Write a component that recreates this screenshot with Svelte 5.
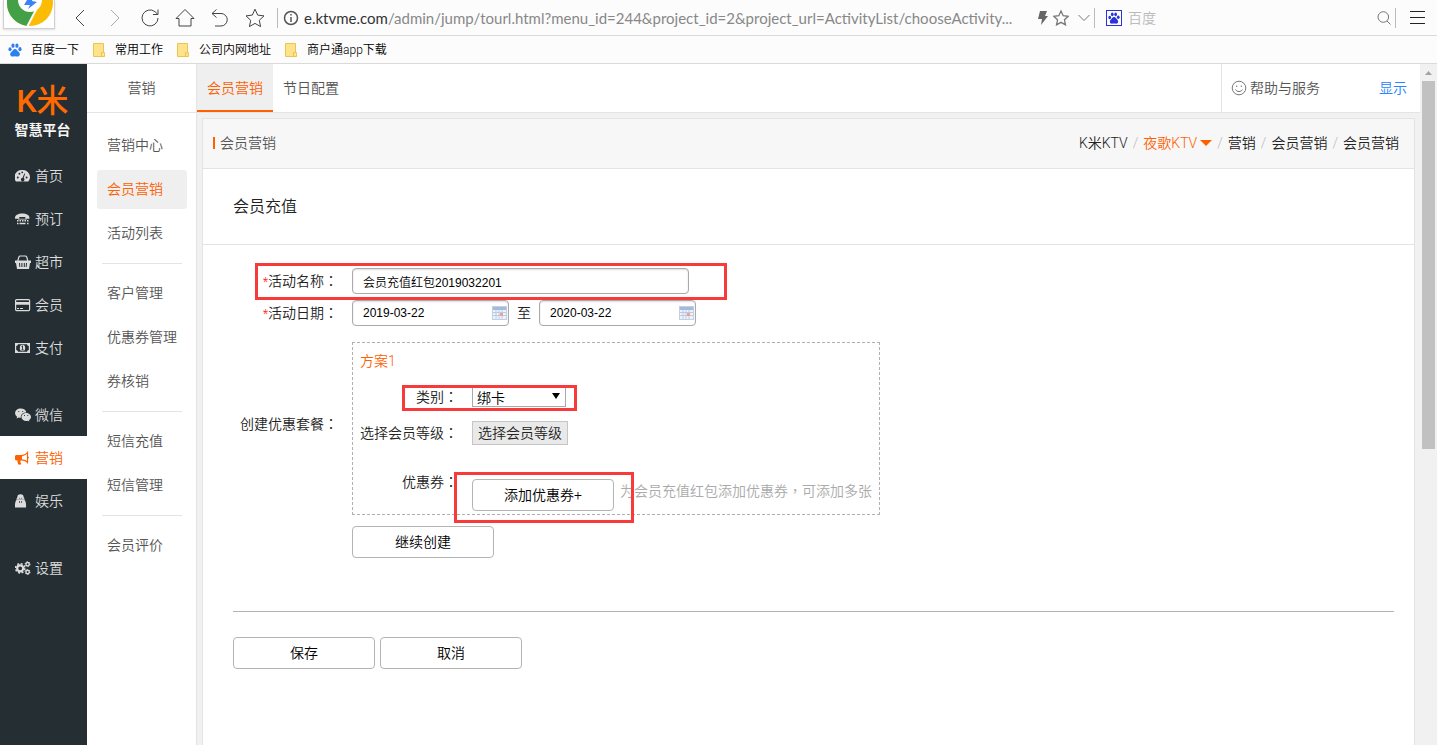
<script lang="ts">
  type NavItem = { label: string; icon: string; gap?: boolean };

  const bookmarks = ['常用工作', '公司内网地址', '商户通app下载'];

  const navItems: NavItem[] = [
    { label: '首页', icon: 'dashboard' },
    { label: '预订', icon: 'phone' },
    { label: '超市', icon: 'basket' },
    { label: '会员', icon: 'card' },
    { label: '支付', icon: 'money' },
    { label: '微信', icon: 'wechat', gap: true },
    { label: '营销', icon: 'horn' },
    { label: '娱乐', icon: 'game' },
    { label: '设置', icon: 'gears', gap: true }
  ];

  const menuGroups = [
    ['营销中心', '会员营销', '活动列表'],
    ['客户管理', '优惠券管理', '券核销'],
    ['短信充值', '短信管理'],
    ['会员评价']
  ];

  let activeNav = $state('营销');
  let activeMenu = $state('会员营销');
  let activeTab = $state('会员营销');

  let name = $state('会员充值红包2019032201');
  let startDate = $state('2019-03-22');
  let endDate = $state('2020-03-22');
  let category = $state('绑卡');
  let keyword = $state('');
</script>

{#snippet navIcon(icon: string)}
  <svg class="nav-icon" width="16" height="14" viewBox="0 0 16 14" fill="currentColor" aria-hidden="true">
    {#if icon === 'dashboard'}
      <path fill-rule="evenodd" d="M7.2 1A7.200 7.200 0 0 0 1 12.600h12.400A7.200 7.200 0 0 0 7.200 1zM1.800 8.500a1 1 0 1 1 2 0 1 1 0 0 1-2 0zM3.400 4.800a1 1 0 1 1 2 0 1 1 0 0 1-2 0zM6.300 3.300a.9.9 0 1 1 1.800 0 .9.9 0 0 1-1.800 0zM10.600 8.500a1 1 0 1 1 2 0 1 1 0 0 1-2 0zM9.300 4.400l.8.4-1.400 4.200a1.800 1.800 0 1 1-1.100-.3z" />
    {:else if icon === 'phone'}
      <path d="M0 6C0 3 3 1.500 7.300 1.500s7.200 1.500 7.200 4.500v.7h-4.200V5h-6v1.700H0z" />
      <path d="M2 8h1.500v1.500H2zM4.500 8H6v1.500H4.500zM7 8h1.500v1.500H7zM9.500 8H11v1.500H9.500zM12 8h1.500v1.500H12zM2 10.800h1.500v1.500H2zM4.500 10.800h6v1.500h-6zM12 10.800h1.500v1.500H12z" />
      <path d="M3 6.500h9V8H3z" opacity="0.5" />
    {:else if icon === 'basket'}
      <path d="M2.800 6l1-4 1-1h6l1 1 1 4" fill="none" stroke="currentColor" stroke-width="1.200" />
      <path fill-rule="evenodd" d="M0 5.500h16V8h-1l-1 6H2L1 8H0zM4 8l.4 4h.9L5 8zm2.400 0v4h1V8zm2.400 0v4h1V8zM11 8l-.3 4h.9L12 8z" />
    {:else if icon === 'card'}
      <rect x="0.600" y="1.600" width="14" height="11" rx="1" fill="none" stroke="currentColor" stroke-width="1.200" />
      <path d="M1 4h13v2.800H1zM2 10h2v1H2zM5 10h3v1H5z" />
    {:else if icon === 'money'}
      <path fill-rule="evenodd" d="M0 2h15v10H0zM3 3.200A2 2 0 0 1 1.200 5v4A2 2 0 0 1 3 10.800h9A2 2 0 0 1 13.800 9V5A2 2 0 0 1 12 3.200z" />
      <ellipse cx="7.500" cy="7" rx="2.700" ry="3.300" />
      <path d="M6.500 5.500l1-.7v4M6.300 9h2.600" fill="none" stroke="#242e33" stroke-width="0.900" />
    {:else if icon === 'wechat'}
      <path d="M5.800.5C2.600.5.1 2.500.1 5.200c0 1.500.8 2.700 2 3.600L1.600 10.500l2-1c.8.2 1.500.3 2.300.3-.8-3 2-5.500 5.500-5.400C10.900 2.100 8.600.5 5.800.5z" />
      <path d="M16 9c0-2.300-2.300-4-4.800-4S6.400 6.700 6.400 9s2.200 4 4.800 4c.6 0 1.100-.1 1.700-.3l1.500.9-.4-1.500C15.200 11.400 16 10.300 16 9z" />
      <path d="M3.300 3.500h1M7.200 3.500h1M9 7.500h1M12.300 7.500h1" stroke="#242e33" stroke-width="0.900" />
    {:else if icon === 'horn'}
      <path d="M1 4h6v5.500H5.500c-.3 1.500.2 2.500.9 3.500-1 1-2.800.8-3.200.2-.5-1.400-1-2.400-.5-3.700H1L0 8.500V5z" />
      <path d="M7 4.600C9 4.500 11 3.500 12.500 1.500v10C11 9.500 9 9 7 8.900" fill="none" stroke="currentColor" stroke-width="1.200" />
      <path d="M12.800 5.300c1.400.3 1.400 2.200 0 2.600z" />
    {:else if icon === 'game'}
      <path d="M5.500.3C3.300.3 2.200 1.600 2.400 3.300L1.600 4.500v1h7.800v-1L8.600 3.300C8.800 1.600 7.700.3 5.500.3z" />
      <path d="M1.600 5.500h7.800c1.400 2 1.900 4.500 1.600 8H0c-.3-3.500.2-6 1.600-8z" />
      <path d="M4.200 4.300h1M6.200 4.300h1M4.500 7v2M6.600 7v2" stroke="#242e33" stroke-width="0.700" />
    {:else if icon === 'gears'}
      <circle cx="5.200" cy="7.300" r="3" fill="none" stroke="currentColor" stroke-width="2.200" />
      <circle cx="5.200" cy="7.300" r="4.600" fill="none" stroke="currentColor" stroke-width="1.600" stroke-dasharray="2 1.610" />
      <circle cx="12.600" cy="3.200" r="1.700" fill="none" stroke="currentColor" stroke-width="1.400" />
      <circle cx="12.600" cy="3.200" r="2.500" fill="none" stroke="currentColor" stroke-dasharray="1.200 1.420" />
      <circle cx="12.600" cy="11" r="1.700" fill="none" stroke="currentColor" stroke-width="1.400" />
      <circle cx="12.600" cy="11" r="2.500" fill="none" stroke="currentColor" stroke-dasharray="1.200 1.420" />
    {/if}
  </svg>
{/snippet}

{#snippet paw(size: number)}
  <svg width={size} height={size} viewBox="0 0 16 16" fill="currentColor" aria-hidden="true">
    <ellipse cx="2.300" cy="7.200" rx="1.800" ry="2.300" />
    <ellipse cx="5.700" cy="3" rx="1.800" ry="2.500" />
    <ellipse cx="10.200" cy="3" rx="1.800" ry="2.500" />
    <ellipse cx="13.700" cy="7" rx="1.800" ry="2.300" />
    <path d="M8 6.800c-2 0-2.500 1.900-4 3.200C1.500 12 2.300 15.500 5.200 15.500c1 0 1.800-.3 2.800-.3s1.800.3 2.800.3c3 0 3.700-3.500 1.300-5.500C10.500 8.700 10 6.800 8 6.800z" />
  </svg>
{/snippet}

{#snippet calendar()}
  <svg class="calendar" width="15" height="14" viewBox="0 0 15 14" aria-hidden="true">
    <rect x="0.500" y="0.500" width="14" height="13" fill="#eef3fb" stroke="#c3cfe2" />
    <path d="M1 1h13v3H1z" fill="#a3b9de" />
    <path d="M1 6.500h13M1 9.500h13M4 4v9M7 4v9M10 4v9" stroke="#bccbe4" />
    <rect x="8" y="7" width="3" height="3" fill="#f0a08c" />
  </svg>
{/snippet}

{#snippet colon()}<span class="colon">：</span>{/snippet}

<div class="window">
  <header class="browser">
    <div class="toolbar">
      <div class="browser-logo">
        <svg width="46" height="27" viewBox="0 0 46 27" aria-hidden="true">
          <circle cx="23" cy="3" r="23" fill="#fbbc05" />
          <path d="M0 0v3a23 23 0 0 0 20 23L31 6 12 0z" fill="#43a047" />
          <path d="M20 27L32 4" stroke="#fff" stroke-width="2" />
          <circle cx="23" cy="0" r="12" fill="#fff" />
          <path d="M20 0l-3 5 6 0-2 4 9-7-5-1 1-3z" fill="#3b82f6" />
        </svg>
      </div>
      <div class="tools">
        <button aria-label="后退">
          <svg width="20" height="20" viewBox="0 0 20 20"><path d="M14 2L6 10l8 8" /></svg>
        </button>
        <button class="disabled" aria-label="前进">
          <svg width="20" height="20" viewBox="0 0 20 20"><path d="M6 2l8 8-8 8" /></svg>
        </button>
        <button aria-label="刷新">
          <svg width="20" height="20" viewBox="0 0 20 20"><path d="M18 10a8 8 0 1 1-3-6.300L17.500 6M18 1.500V6.500H13" /></svg>
        </button>
        <button aria-label="主页">
          <svg width="20" height="20" viewBox="0 0 20 20"><path d="M1 10.500L10 1.500l9 9h-3v7.500H4v-7.500z" /></svg>
        </button>
        <button aria-label="恢复">
          <svg width="20" height="20" viewBox="0 0 20 20"><path d="M6.500 1.500L2 5.500l4.500 4M2 5.500h9a6 6 0 0 1 0 12.500H5" /></svg>
        </button>
        <button aria-label="收藏">
          <svg width="20" height="20" viewBox="0 0 20 20"><path d="M10 1.200l2.700 5.900 6.300.8-4.700 4.400 1.300 6.300L10 15.400l-5.600 3.200 1.300-6.300L1 7.900l6.300-.8z" /></svg>
        </button>
      </div>
      <div class="address">
        <svg width="16" height="16" viewBox="0 0 16 16" fill="none" stroke="#555" stroke-width="1.500" aria-hidden="true">
          <circle cx="8" cy="8" r="6.500" />
          <path d="M8 7v5M8 4v1.600" />
        </svg>
        <div class="url"><b>e.ktvme.com</b>/admin/jump/tourl.html?menu_id=244&amp;project_id=2&amp;project_url=ActivityList/chooseActivity...</div>
        <svg width="10" height="14" viewBox="0 0 10 14" fill="#666" aria-hidden="true"><path d="M2 0h7L7 5h3L3 14l1-6H0z" /></svg>
        <svg width="16" height="16" viewBox="0 0 20 20" fill="none" stroke="#777" stroke-width="1.600" aria-hidden="true"><path d="M10 1.200l2.700 5.900 6.300.8-4.700 4.400 1.300 6.300L10 15.400l-5.600 3.200 1.300-6.300L1 7.900l6.300-.8z" /></svg>
        <svg class="expand" width="12" height="8" viewBox="0 0 12 8" fill="none" stroke="#777" aria-hidden="true"><path d="M.5 1L6 6.500 11.500 1" /></svg>
      </div>
      <div class="search">
        <span class="engine">{@render paw(12)}</span>
        <input type="text" placeholder="百度" aria-label="搜索" bind:value={keyword} />
        <svg width="14" height="14" viewBox="0 0 14 14" fill="none" stroke="#777" aria-hidden="true">
          <circle cx="6.300" cy="6" r="5.300" />
          <path d="M10 10l3.500 3.500" />
        </svg>
      </div>
      <button class="menu" aria-label="菜单">
        <svg width="15" height="15" viewBox="0 0 15 15"><path d="M0 1.500h15M0 7.500h15M0 13.500h15" /></svg>
      </button>
    </div>
    <nav class="bookmarks">
      <a href="#baidu"><span class="baidu">{@render paw(14)}</span>百度一下</a>
      {#each bookmarks as bookmark}
        <a href="#bookmark">
          <svg width="14" height="14" viewBox="0 0 14 14" aria-hidden="true">
            <path d="M1.500.5h10v9h1v4h-11z" fill="#ffe38c" stroke="#e8c64e" />
            <path d="M9.500 13V9.500h2" fill="none" stroke="#e8c64e" />
          </svg>
          {bookmark}
        </a>
      {/each}
    </nav>
  </header>

  <div class="app">
    <nav class="sidebar">
      <div class="brand">
        <span class="brand-name">K米</span>
        <span class="brand-sub">智慧平台</span>
      </div>
      {#each navItems as item}
        <button
          class="nav-item"
          class:gap={item.gap}
          class:active={activeNav === item.label}
          onclick={() => (activeNav = item.label)}
        >
          {@render navIcon(item.icon)}
          {item.label}
        </button>
      {/each}
    </nav>

    <aside class="submenu">
      <h2>营销</h2>
      {#each menuGroups as group}
        <div class="group">
          {#each group as entry}
            <button class:active={activeMenu === entry} onclick={() => (activeMenu = entry)}>{entry}</button>
          {/each}
        </div>
      {/each}
    </aside>

    <main>
      <div class="tabs">
        {#each ['会员营销', '节日配置'] as tab}
          <button class="tab" class:active={activeTab === tab} onclick={() => (activeTab = tab)}>{tab}</button>
        {/each}
        <div class="help">
          <svg width="16" height="16" viewBox="0 0 16 16" fill="none" stroke="#777" aria-hidden="true">
            <circle cx="8" cy="8" r="6.800" />
            <path d="M4.500 9.500c1.500 2.700 5.500 2.700 7 0M5.700 5.500v1.500M10.300 5.500v1.500" />
          </svg>
          <a href="#help">帮助与服务</a>
          <a class="show" href="#show">显示</a>
        </div>
      </div>

      <section class="panel">
        <div class="panel-head">
          <h1>会员营销</h1>
          <div class="crumbs">
            <a href="#ktv">K米KTV</a><i>/</i><a class="shop" href="#shop">夜歌KTV</a><i>/</i><a href="#marketing">营销</a><i>/</i><a href="#member">会员营销</a><i>/</i><a href="#member">会员营销</a>
          </div>
        </div>
        <h2 class="title">会员充值</h2>

        <form onsubmit={(e) => e.preventDefault()}>
          <div class="row marked">
            <label for="name"><em>*</em>活动名称{@render colon()}</label>
            <input id="name" class="text name" type="text" bind:value={name} />
            <span class="mark mark-name"></span>
          </div>
          <div class="row">
            <label for="start"><em>*</em>活动日期{@render colon()}</label>
            <span class="date">
              <input id="start" class="text" type="text" bind:value={startDate} />
              {@render calendar()}
            </span>
            <label class="to" for="end">至</label>
            <span class="date">
              <input id="end" class="text" type="text" bind:value={endDate} />
              {@render calendar()}
            </span>
          </div>

          <div class="row plans">
            <span class="label">创建优惠套餐{@render colon()}</span>
            <div class="plan">
              <h3>方案1</h3>
              <div class="plan-row marked">
                <label for="category">类别{@render colon()}</label>
                <span class="select">
                  <select id="category" bind:value={category}>
                    <option>绑卡</option>
                    <option>充值</option>
                  </select>
                </span>
                <span class="mark mark-category"></span>
              </div>
              <div class="plan-row">
                <label for="level">选择会员等级{@render colon()}</label>
                <button id="level" class="level" type="button">选择会员等级</button>
              </div>
              <div class="plan-row coupon marked">
                <label for="coupon">优惠券{@render colon()}</label>
                <button id="coupon" class="btn" type="button">添加优惠券+</button>
                <span class="hint">为会员充值红包添加优惠券，可添加多张</span>
                <span class="mark mark-coupon"></span>
              </div>
            </div>
          </div>
          <button class="btn more" type="button">继续创建</button>

          <div class="actions">
            <button class="btn" type="submit">保存</button>
            <button class="btn" type="button">取消</button>
          </div>
        </form>
      </section>
    </main>

    <div class="scrollbar">
      <svg width="7" height="4" viewBox="0 0 7 4" aria-hidden="true"><path d="M0 4l3.500-4L7 4z" fill="#a3a3a3" /></svg>
      <div class="thumb"></div>
    </div>
  </div>
</div>

<style>
  :global(body) {
    margin: 0;
  }

  .window {
    display: flex;
    flex-direction: column;
    height: 100vh;
    overflow: hidden;
    font: 14px/20px Roboto, 'Noto Sans CJK SC', sans-serif;
    font-weight: 350;
    color: #222;
  }

  .window :global(*) {
    box-sizing: border-box;
  }

  button,
  input,
  select {
    font: inherit;
    color: inherit;
    margin: 0;
    padding: 0;
    border: none;
    background: none;
  }

  button {
    cursor: pointer;
  }

  a {
    color: inherit;
    text-decoration: none;
  }

  h1,
  h2,
  h3 {
    margin: 0;
    font: inherit;
  }

  svg {
    display: block;
    flex: none;
  }

  /* browser bars */
  .browser {
    flex: none;
    background: #fcfcfc;
  }

  .toolbar {
    display: flex;
    align-items: center;
    height: 36px;
    border-bottom: 1px solid #dadada;
  }

  .browser-logo {
    align-self: flex-start;
    width: 52px;
    height: 29px;
    margin-left: 3px;
    padding-left: 3px;
    background: #fff;
    border: 1px solid #d0d0d0;
    border-top: none;
    box-shadow: 0 1px 2px #ddd;
    overflow: hidden;
  }

  .tools {
    display: flex;
    gap: 15px;
    padding: 0 12px 0 15px;
  }

  .tools svg,
  .menu svg {
    fill: none;
    stroke: #444;
  }

  .tools .disabled svg {
    stroke: #aaa;
  }

  .address {
    display: flex;
    align-items: center;
    gap: 5px;
    flex: 1;
    min-width: 0;
    height: 20px;
    padding: 0 4px 0 5px;
    border: solid #bbb;
    border-width: 0 1px;
  }

  .expand {
    margin-left: 4px;
  }

  .url {
    flex: 1;
    overflow: hidden;
    white-space: nowrap;
    font: 15px/20px Lato, 'Noto Sans', sans-serif;
    color: #888;
  }

  .url b {
    font-weight: 400;
    color: #333;
  }

  .search {
    display: flex;
    align-items: center;
    width: 301px;
    height: 20px;
    padding: 0 4px 0 11px;
    border-right: 1px solid #bbb;
  }

  .engine {
    display: flex;
    align-items: center;
    justify-content: center;
    width: 16px;
    height: 16px;
    border: 1px solid #2a33d8;
    color: #2a33d8;
  }

  .search input {
    flex: 1;
    min-width: 0;
    padding-left: 6px;
    outline: none;
  }

  .search input::placeholder {
    color: #bbb;
  }

  .menu {
    padding: 0 12px 0 14px;
  }

  .menu svg {
    stroke: #222;
  }

  .bookmarks {
    display: flex;
    align-items: center;
    gap: 13px;
    height: 28px;
    padding-left: 8px;
    border-bottom: 1px solid #dadada;
    font-size: 12px;
    color: #000;
  }

  .bookmarks a {
    display: flex;
    align-items: center;
    gap: 9px;
  }

  .baidu {
    color: #2d7ff0;
  }

  /* app */
  .app {
    display: flex;
    flex: 1;
    min-height: 0;
  }

  .sidebar {
    flex: none;
    width: 87px;
    background: #242e33;
    color: #dcdcdc;
  }

  .brand {
    display: flex;
    flex-direction: column;
    align-items: center;
    height: 90px;
    padding: 18px 2px 0 0;
  }

  .brand-name {
    font-size: 32px;
    line-height: 38px;
    font-weight: 500;
    color: #ff6a00;
  }

  .brand-sub {
    font-size: 14px;
    line-height: 20px;
    font-weight: 700;
    color: #f4f4f4;
  }

  .nav-item {
    display: flex;
    align-items: center;
    gap: 4px;
    width: 100%;
    height: 43px;
    padding-left: 15px;
  }

  .nav-item.gap {
    margin-top: 24px;
  }

  .nav-item.active {
    background: #fff;
    color: #ff6000;
  }

  .submenu {
    flex: none;
    width: 110px;
    border-right: 1px solid #e4e4e4;
    background: #fff;
    color: #555;
  }

  .submenu h2 {
    height: 49px;
    margin-bottom: 13px;
    border-bottom: 1px solid #e4e4e4;
    line-height: 48px;
    text-align: center;
  }

  .group {
    display: flex;
    flex-direction: column;
    gap: 5px;
    padding: 0 9px 0 10px;
  }

  .group + .group::before {
    content: '';
    height: 1px;
    margin: 10px 5px 5px;
    background: #e4e4e4;
  }

  .group button {
    height: 39px;
    padding: 0 0 2px 10px;
    border-radius: 3px;
    text-align: left;
  }

  .group button.active {
    background: #efefef;
    color: #ff6000;
  }

  main {
    display: flex;
    flex-direction: column;
    flex: 1;
    min-width: 0;
    background: #f1f1f1;
  }

  .tabs {
    display: flex;
    flex: none;
    height: 49px;
    border-bottom: 1px solid #e4e4e4;
    background: #fff;
    color: #555;
  }

  .tab {
    padding: 2px 10px 0;
    border-bottom: 2px solid transparent;
  }

  .tab.active {
    border-color: #ff6000;
    background: #efefef;
    color: #ff6000;
  }

  .help {
    display: flex;
    align-items: center;
    gap: 3px;
    width: 199px;
    margin-left: auto;
    padding: 0 13px 0 9px;
    border-left: 1px solid #e4e4e4;
  }

  .show {
    margin-left: auto;
    color: #2a83ff;
  }

  .panel {
    flex: 1;
    margin: 5px 5px 0;
    border: 1px solid #e4e4e4;
    border-bottom: none;
    background: #fff;
  }

  .panel-head {
    display: flex;
    align-items: center;
    justify-content: space-between;
    height: 50px;
    padding: 0 15px 2px 10px;
    border-bottom: 1px solid #e4e4e4;
    background: #f7f7f7;
  }

  .panel-head h1 {
    display: flex;
    align-items: center;
    color: #555;
  }

  .panel-head h1::before {
    content: '';
    width: 2px;
    height: 12px;
    margin-right: 5px;
    background: #ff6000;
  }

  .crumbs {
    display: flex;
  }

  .crumbs i {
    padding: 0 5px;
    font-style: normal;
    color: #bbb;
  }

  .crumbs .shop {
    display: flex;
    align-items: center;
    gap: 3px;
    color: #ff6000;
  }

  .crumbs .shop::after {
    content: '';
    border: 6px solid transparent;
    border-top-color: #ff6000;
    border-bottom: none;
  }

  .title {
    padding: 0 30px;
    border-bottom: 1px solid #e4e4e4;
    font-size: 16px;
    line-height: 75px;
  }

  form {
    padding: 20px 20px 0 30px;
  }

  .row {
    display: flex;
    align-items: center;
    height: 32px;
  }

  .row > label:first-child,
  .label {
    flex: none;
    width: 105px;
    margin-right: 14px;
    text-align: right;
  }

  /* the TC face centres full-width punctuation in its cell */
  .colon,
  .hint {
    font-family: 'Noto Sans CJK TC', sans-serif;
    line-height: 1;
  }

  em {
    font-style: normal;
    font-size: 12px;
    color: #f00;
  }

  .text {
    width: 157px;
    height: 26px;
    padding: 0 10px;
    border: 1px solid #aaa;
    border-radius: 4px;
    box-shadow: inset 0 1px 2px #ddd;
    font: 12px/20px 'Liberation Sans', 'Noto Sans CJK SC', sans-serif;
    font-weight: 350;
    color: #000;
  }

  .text.name {
    width: 337px;
  }

  .date {
    position: relative;
  }

  .calendar {
    position: absolute;
    right: 2px;
    top: 6px;
  }

  .to {
    width: 30px;
    text-align: center;
  }

  .plans {
    height: auto;
    margin-top: 13px;
  }

  .plans .label {
    padding-bottom: 10px;
  }

  .plan {
    width: 528px;
    padding: 8px 7px 3px;
    border: 1px dashed #b0b0b0;
  }

  .plan h3 {
    margin-bottom: 8px;
    color: #ff6000;
  }

  .plan-row {
    display: flex;
    align-items: center;
    height: 36px;
  }

  .plan-row label {
    flex: none;
    width: 98px;
    margin-right: 14px;
    text-align: right;
  }

  .select {
    position: relative;
  }

  .select::after {
    content: '';
    position: absolute;
    right: 6px;
    top: 6px;
    border: 4px solid transparent;
    border-top: 6px solid #000;
    border-bottom: none;
    pointer-events: none;
  }

  select {
    display: block;
    width: 94px;
    height: 20px;
    padding-left: 4px;
    border: 1px solid #aaa;
    appearance: none;
    color: #000;
  }

  .level {
    height: 24px;
    padding: 0 5px;
    border: 1px solid #c6c6c6;
    background: #e9e9e9;
  }

  .plan-row.coupon {
    align-items: flex-start;
    height: auto;
    padding-top: 21px;
  }

  .coupon .btn {
    margin-top: 7px;
  }

  .hint {
    margin: 8px 0 0 6px;
    line-height: 20px;
    white-space: nowrap;
    color: #aaa;
  }

  .btn {
    flex: none;
    width: 142px;
    height: 32px;
    border: 1px solid #b4b4b4;
    border-radius: 4px;
    background: #fff;
    color: #000;
  }

  .more {
    display: block;
    margin: 11px 0 0 119px;
  }

  .actions {
    display: flex;
    gap: 5px;
    margin-top: 53px;
    padding-top: 25px;
    border-top: 1px solid #b4b4b4;
  }

  /* red highlight frames over the fields */
  .marked {
    position: relative;
  }

  .mark {
    position: absolute;
    border: 3px solid #f93a3a;
    pointer-events: none;
  }

  .mark-name {
    left: 22px;
    top: -2px;
    width: 472px;
    height: 37px;
  }

  .mark-category {
    left: 42px;
    top: 6px;
    width: 175px;
    height: 26px;
  }

  .mark-coupon {
    left: 94px;
    top: 21px;
    width: 180px;
    height: 51px;
  }

  .scrollbar {
    display: flex;
    flex-direction: column;
    align-items: center;
    flex: none;
    width: 17px;
    padding: 7px 2px 0;
    background: #f1f1f1;
  }

  .thumb {
    width: 13px;
    height: 368px;
    margin-top: 6px;
    background: #c1c1c1;
  }
</style>
